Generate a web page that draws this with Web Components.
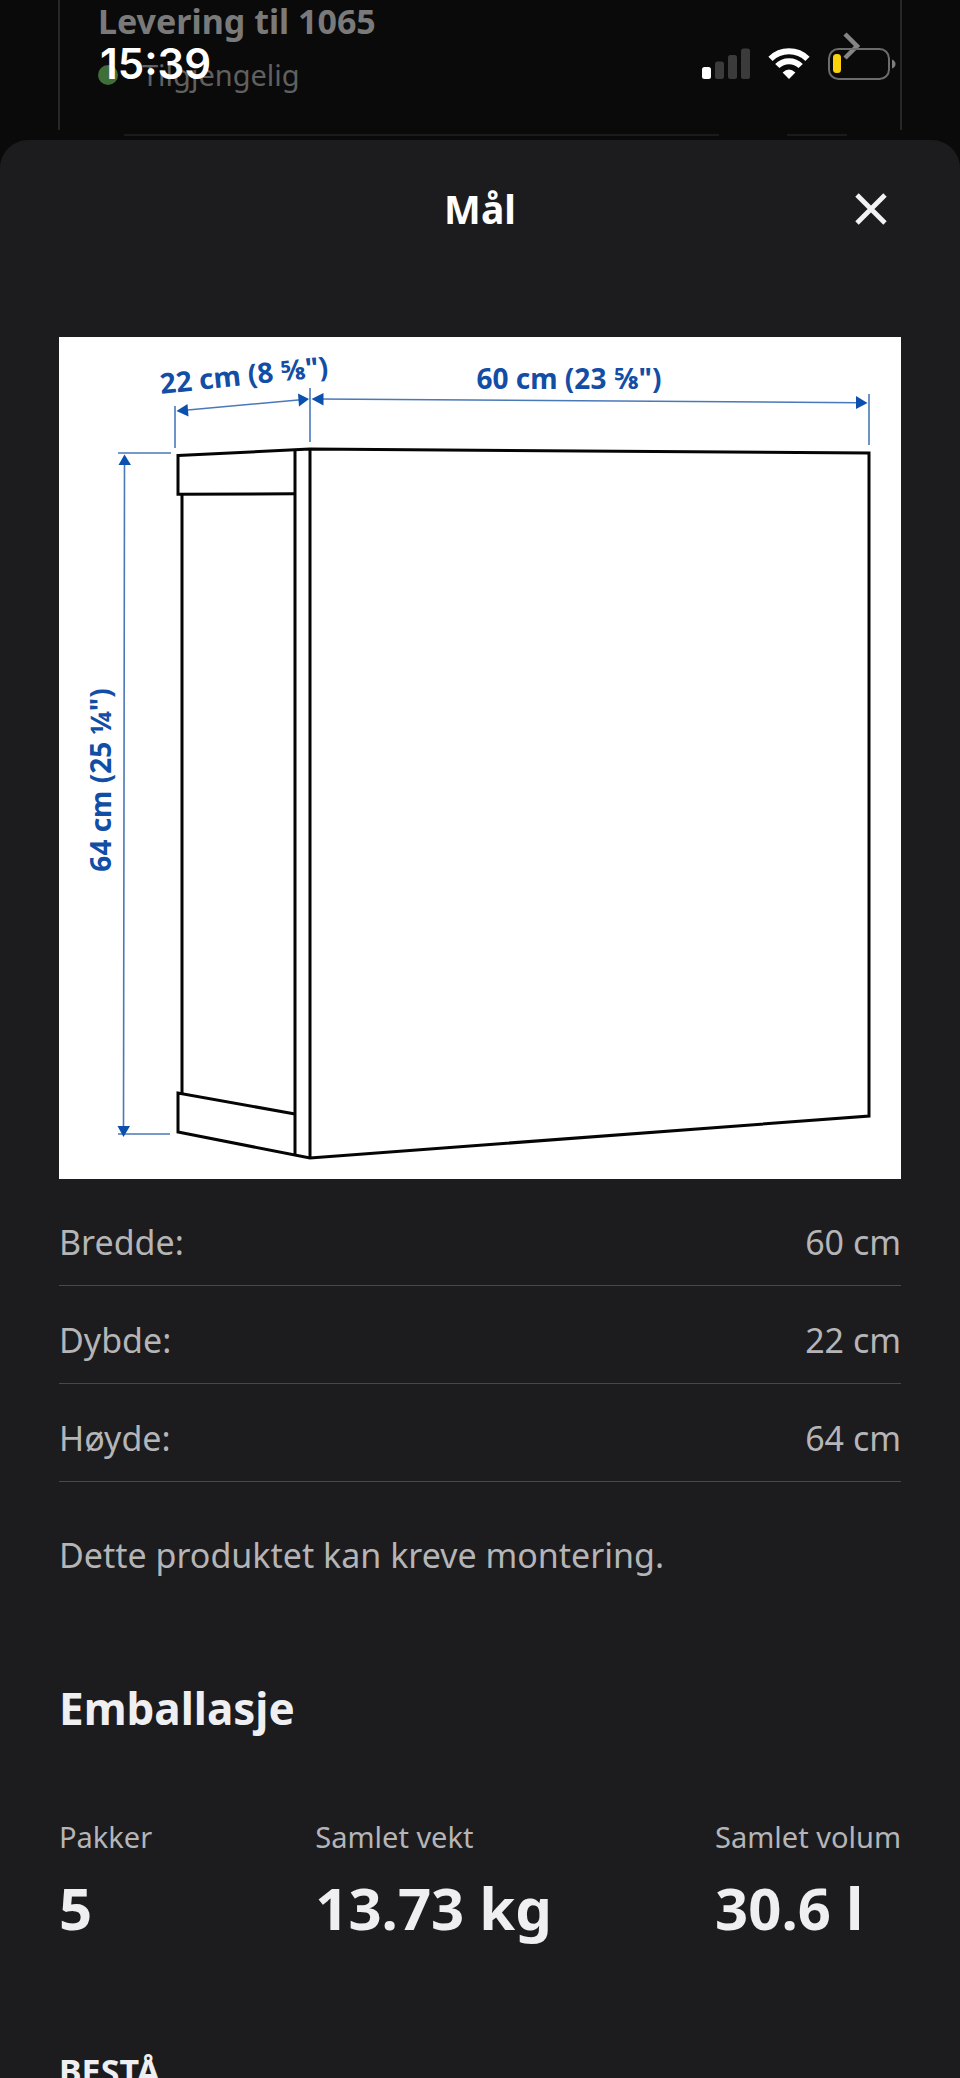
<!DOCTYPE html>
<html lang="nb">
<head>
<meta charset="utf-8">
<meta name="viewport" content="width=device-width, initial-scale=1">
<title>Mål</title>
<style>
  body {
    margin: 0;
    background: #0a0a0a;
    color: #efeff1;
    font-family: "Noto Sans", sans-serif;
  }
</style>
</head>
<body>
<product-page>
  <status-bar slot="status" time="15:39"></status-bar>
  <delivery-card slot="behind" status="Tilgjengelig">Levering til 1065</delivery-card>
  <bottom-sheet heading="Mål">
    <measure-drawing></measure-drawing>
    <measure-table></measure-table>
    <p class="note">Dette produktet kan kreve montering.</p>
    <package-summary heading="Emballasje">
      <package-stat label="Pakker">5</package-stat>
      <package-stat label="Samlet vekt">13.73 kg</package-stat>
      <package-stat label="Samlet volum">30.6 l</package-stat>
    </package-summary>
    <h3 class="product">BESTÅ</h3>
  </bottom-sheet>
</product-page>

<script>
// Small helper: attach an open shadow root with the given markup
function render(el, html) {
  el.attachShadow({ mode: 'open' }).innerHTML = html;
}

class ProductPage extends HTMLElement {
  constructor() {
    super();
    render(this, `
      <style>
        :host {
          display: flex;
          flex-direction: column;
          position: relative;
          height: 100vh;
          overflow: hidden;
        }
      </style>
      <slot name="behind"></slot>
      <slot></slot>
      <slot name="status"></slot>
    `);
  }
}

// Phone status bar, floats over the page
class StatusBar extends HTMLElement {
  constructor() {
    super();
    render(this, `
      <style>
        :host {
          display: flex;
          justify-content: space-between;
          align-items: center;
          position: absolute;
          top: 40px;
          left: 0;
          right: 0;
          height: 48px;
          padding: 0 64px 0 100px;
          color: #fff;
          pointer-events: none;
        }
        time {
          font: 600 42px/48px Inter, sans-serif;
        }
        .icons {
          display: flex;
          align-items: center;
          gap: 18px;
        }
        svg { display: block; }
      </style>
      <time>${this.getAttribute('time')}</time>
      <div class="icons">
        <svg width="48" height="32" viewBox="0 0 48 32" aria-label="Signal">
          <rect x="0" y="19" width="9" height="12" rx="2.5" fill="#fff"/>
          <g fill="#3b3b3b">
            <rect x="13" y="13.5" width="9" height="17.5" rx="2.5"/>
            <rect x="26" y="7" width="9" height="24" rx="2.5"/>
            <rect x="39" y="0.5" width="9" height="30.5" rx="2.5"/>
          </g>
        </svg>
        <svg width="42" height="32" viewBox="0 0 42 32" aria-label="Wi-Fi">
          <g fill="none" stroke="#fff" stroke-width="6">
            <path d="M2.5 10.8 A26.5 26.5 0 0 1 39.5 10.8"/>
            <path d="M9.3 18 A16.5 16.5 0 0 1 32.7 18"/>
          </g>
          <path d="M21 31 L14.6 24.4 Q21 18.6 27.4 24.4 Z" fill="#fff"/>
        </svg>
        <svg width="68" height="32" viewBox="0 0 68 32" aria-label="Batteri">
          <rect x="1" y="1" width="60" height="30" rx="9.5" fill="none" stroke="#6c6c6c" stroke-width="2"/>
          <path d="M64 11.5 Q67.5 13 67.5 16 Q67.5 19 64 20.5 Z" fill="#7c7c7c"/>
          <rect x="5" y="6" width="8" height="19" rx="3.5" fill="#fdd20a"/>
        </svg>
      </div>
    `);
  }
}

// Dimmed card of the page below the sheet
class DeliveryCard extends HTMLElement {
  constructor() {
    super();
    render(this, `
      <style>
        :host {
          display: block;
          padding: 0 58px 4px;
        }
        .card {
          display: flex;
          justify-content: space-between;
          align-items: flex-start;
          height: 130px;
          box-sizing: border-box;
          border: solid #272727;
          border-width: 0 2px;
          padding: 1px 38px 0;
        }
        .title {
          font-size: 34px;
          line-height: 40px;
          font-weight: 700;
          color: #7a7a7a;
        }
        .status {
          display: flex;
          align-items: center;
          gap: 24px;
          margin-top: 14px;
          font-size: 29px;
          line-height: 40px;
          color: #606060;
        }
        .dot {
          width: 20px;
          height: 20px;
          border-radius: 50%;
          background: #3f6f38;
        }
        .chevron { margin-top: 31px; }
        .next {
          display: grid;
          grid-template-columns: 595px 60px;
          justify-content: start;
          column-gap: 68px;
          margin-top: 4px;
          padding-left: 66px;
        }
        .next i {
          height: 2px;
          background: #1b1b1c;
        }
      </style>
      <div class="card">
        <div>
          <div class="title"><slot></slot></div>
          <div class="status"><span class="dot"></span><span>${this.getAttribute('status')}</span></div>
        </div>
        <svg class="chevron" width="20" height="28" viewBox="0 0 20 28">
          <path d="M3 2 L15 14 L3 26" fill="none" stroke="#858585" stroke-width="4.5"/>
        </svg>
      </div>
      <div class="next"><i></i><i></i></div>
    `);
  }
}

class BottomSheet extends HTMLElement {
  constructor() {
    super();
    render(this, `
      <style>
        :host {
          display: block;
          flex: 1 0 auto;
          border-radius: 28px 28px 0 0;
          background: #1c1c1e;
        }
        header {
          display: grid;
          grid-template-columns: 1fr auto 1fr;
          align-items: center;
          height: 138px;
          padding: 0 59px;
        }
        h1 {
          grid-column: 2;
          margin: 0;
          font-size: 39px;
          line-height: 48px;
          color: #fff;
        }
        button {
          display: flex;
          align-items: center;
          justify-content: center;
          justify-self: end;
          width: 60px;
          height: 60px;
          padding: 0;
          border: 0;
          background: none;
          cursor: pointer;
        }
        main { padding: 59px 59px 0; }
        ::slotted(.note) {
          margin: 49px 0 99px;
          font-size: 34px;
          line-height: 48px;
          color: #b5b5b7;
        }
        ::slotted(.product) {
          margin: 99px 0 0;
          font-size: 34px;
          line-height: 48px;
        }
      </style>
      <header>
        <h1>${this.getAttribute('heading')}</h1>
        <button aria-label="Lukk">
          <svg width="32" height="32" viewBox="0 0 32 32">
            <path d="M2 2 L30 30 M30 2 L2 30" stroke="#f2f2f4" stroke-width="4.8"/>
          </svg>
        </button>
      </header>
      <main><slot></slot></main>
    `);
  }
}

// Line drawing of the cabinet with its dimensions
class MeasureDrawing extends HTMLElement {
  constructor() {
    super();
    render(this, `
      <style>
        :host {
          display: block;
          background: #fff;
        }
        svg {
          display: block;
          width: 100%;
          height: auto;
        }
        .body {
          fill: none;
          stroke: #050505;
          stroke-width: 3;
        }
        .dim {
          fill: none;
          stroke: #4a78b8;
          stroke-width: 1.6;
        }
        .head { fill: #0b50ae; }
        text {
          font: 700 28px "Noto Sans", sans-serif;
          fill: #124da6;
          text-anchor: middle;
        }
      </style>
      <svg viewBox="0 0 842 842">
        <g class="body">
          <path d="M119 118.5 L251 112 L810 116 V779 L251 821 L119 795 V756 L236 777"/>
          <path d="M119 117 V157.3 L236 156.7"/>
          <path d="M123 157 V757"/>
          <path d="M236 113 V818"/>
          <path d="M251 112 V821"/>
        </g>
        <g class="dim">
          <path d="M116 69 V111 M251 51 V105 M810 57 V108"/>
          <path d="M59 116 H112 M59 797 H111"/>
          <path d="M126 73.3 L242 62.7 M260 62 L800 65.7 M65.5 126 L64.5 790"/>
        </g>
        <g class="head">
          <path d="M117.5 74 L128.5 67 L129.5 79.5 Z"/>
          <path d="M250 62 L239 56.5 L240 69.5 Z"/>
          <path d="M252.5 62 L264.5 56 V68.5 Z"/>
          <path d="M808.5 66 L797 59 V72 Z"/>
          <path d="M65.5 117.5 L59.5 128 H72 Z"/>
          <path d="M64.5 800 L58.5 789 H71 Z"/>
        </g>
        <text transform="translate(186 48) rotate(-6)">22 cm (8 ⅝")</text>
        <text x="510" y="52">60 cm (23 ⅝")</text>
        <text transform="translate(52 443) rotate(-90)">64 cm (25 ¼")</text>
      </svg>
    `);
  }
}

class MeasureTable extends HTMLElement {
  constructor() {
    super();
    const rows = [
      ['Bredde:', '60 cm'],
      ['Dybde:', '22 cm'],
      ['Høyde:', '64 cm']
    ];
    render(this, `
      <style>
        :host {
          display: block;
          margin-top: 9px;
        }
        table {
          width: 100%;
          border-spacing: 0;
          font-size: 34px;
          line-height: 48px;
          color: #b5b5b7;
        }
        th, td {
          padding: 30px 0 19px;
          border-bottom: 1px solid #48484a;
          font-weight: 400;
          text-align: left;
        }
        td { text-align: right; }
      </style>
      <table>
        ${rows.map(([name, value]) => `<tr><th scope="row">${name}</th><td>${value}</td></tr>`).join('')}
      </table>
    `);
  }
}

class PackageSummary extends HTMLElement {
  constructor() {
    super();
    render(this, `
      <style>
        :host { display: block; }
        h2 {
          margin: 0 0 79px;
          font-size: 44px;
          line-height: 60px;
        }
        .stats {
          display: flex;
          justify-content: space-between;
        }
      </style>
      <h2>${this.getAttribute('heading')}</h2>
      <div class="stats"><slot></slot></div>
    `);
  }
}

class PackageStat extends HTMLElement {
  constructor() {
    super();
    render(this, `
      <style>
        :host {
          display: flex;
          flex-direction: column;
          gap: 11px;
        }
        .label {
          font-size: 29px;
          line-height: 40px;
          color: #b5b5b7;
        }
        .value {
          font-size: 58px;
          line-height: 80px;
          font-weight: 700;
        }
      </style>
      <span class="label">${this.getAttribute('label')}</span>
      <span class="value"><slot></slot></span>
    `);
  }
}

// Register the custom elements
customElements.define('product-page', ProductPage);
customElements.define('status-bar', StatusBar);
customElements.define('delivery-card', DeliveryCard);
customElements.define('bottom-sheet', BottomSheet);
customElements.define('measure-drawing', MeasureDrawing);
customElements.define('measure-table', MeasureTable);
customElements.define('package-summary', PackageSummary);
customElements.define('package-stat', PackageStat);
</script>
</body>
</html>
